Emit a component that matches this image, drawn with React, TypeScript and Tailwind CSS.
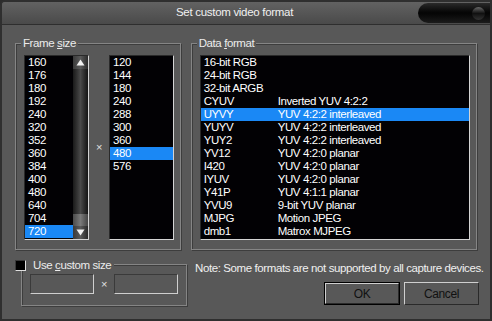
import type { ReactNode } from "react";

const WIDTHS = ["160", "176", "180", "192", "240", "320", "352", "360", "384", "400", "480", "640", "704", "720"];
const HEIGHTS = ["120", "144", "180", "240", "288", "300", "360", "480", "576"];
const FORMATS: [string, string][] = [
  ["16-bit RGB", ""],
  ["24-bit RGB", ""],
  ["32-bit ARGB", ""],
  ["CYUV", "Inverted YUV 4:2:2"],
  ["UYVY", "YUV 4:2:2 interleaved"],
  ["YUYV", "YUV 4:2:2 interleaved"],
  ["YUY2", "YUV 4:2:2 interleaved"],
  ["YV12", "YUV 4:2:0 planar"],
  ["I420", "YUV 4:2:0 planar"],
  ["IYUV", "YUV 4:2:0 planar"],
  ["Y41P", "YUV 4:1:1 planar"],
  ["YVU9", "9-bit YUV planar"],
  ["MJPG", "Motion JPEG"],
  ["dmb1", "Matrox MJPEG"],
];

function Row({ selected, children }: { selected?: boolean; children: ReactNode }) {
  return (
    <div
      className={
        "flex h-[13px] items-center pl-[3px] leading-[13px] text-white " +
        (selected ? "bg-[#1a88f5]" : "")
      }
    >
      {children}
    </div>
  );
}

function ListBox({ className, children }: { className: string; children: ReactNode }) {
  return (
    <div
      className={
        "flex h-[185px] border border-t-[#2a2a2a] border-l-[#2a2a2a] border-r-[#d4d4d4] border-b-[#d4d4d4] bg-[#020104] " +
        className
      }
    >
      {children}
    </div>
  );
}

function Group({ label, className, children }: { label: ReactNode; className: string; children: ReactNode }) {
  return (
    <div className={"relative border border-[#858585] shadow-[inset_1px_1px_0_#3d3d3d,1px_1px_0_#3d3d3d] " + className}>
      <div className="absolute left-[5px] top-[-7px] bg-[#585858] px-[2px] leading-[13px] text-[#ececec]">
        {label}
      </div>
      {children}
    </div>
  );
}

function ScrollBar() {
  return (
    <div className="flex w-[15px] flex-col bg-[#1c1c1c]">
      <div className="flex h-[13px] items-center justify-center bg-gradient-to-r from-[#3a3a3a] via-[#5a5a5a] to-[#2a2a2a]">
        <svg width="9" height="7" viewBox="0 0 9 7">
          <path d="M4.5 0.5 L8.5 6.5 L0.5 6.5 Z" fill="#f2f2f2" />
        </svg>
      </div>
      <div className="flex-1 bg-gradient-to-r from-[#1a1a1a] via-[#4a4a4a] to-[#151515]" />
      <div className="h-[12px] bg-gradient-to-r from-[#4a4a4a] via-[#7a7a7a] to-[#444]" />
      <div className="flex h-[13px] items-center justify-center bg-gradient-to-r from-[#3a3a3a] via-[#5a5a5a] to-[#2a2a2a]">
        <svg width="9" height="7" viewBox="0 0 9 7">
          <path d="M0.5 0.5 L8.5 0.5 L4.5 6.5 Z" fill="#f2f2f2" />
        </svg>
      </div>
    </div>
  );
}

function EditBox() {
  return (
    <div className="h-[20px] w-[64px] border border-t-[#3a3a3a] border-l-[#3a3a3a] border-r-[#cfcfcf] border-b-[#cfcfcf] bg-[#585858]" />
  );
}

export default function App() {
  return (
    <div className="h-[321px] w-[492px] bg-[#2c2c2c] font-['Liberation_Sans',Arial,sans-serif] text-[11.5px] tracking-[-0.4px]">
      <div className="flex h-full flex-col overflow-hidden rounded-tl-[5px] border-2 border-[#2f2f2f] bg-[#585858]">
        {/* title bar */}
        <div className="flex h-[23px] shrink-0 items-center border-b border-[#2e2e2e] bg-gradient-to-b from-[#626262] to-[#4a4a4a]">
          <div className="flex-1 pl-[174px] text-[11.5px] tracking-[-0.3px] text-[#f0f0f0]">Set custom video format</div>
          <div className="flex h-[20px] w-[72px] items-center justify-end rounded-l-[10px] bg-gradient-to-b from-[#2a2a2a] via-[#050505] to-[#1c1c1c] pr-[5px]">
            <div className="h-[13px] w-[13px] rounded-full bg-gradient-to-b from-[#6a6a6a] via-[#111] to-[#333]" />
          </div>
        </div>

        <div className="flex flex-col px-[13px] pt-[18px]">
          <div className="flex gap-[10px]">
            <Group
              className="h-[207px] w-[166px]"
              label={
                <>
                  Frame <span className="underline">s</span>ize
                </>
              }
            >
              <div className="flex items-start pl-[8px] pt-[11px]">
                <ListBox className="w-[65px]">
                  <div className="flex-1">
                    {WIDTHS.map((w) => (
                      <Row key={w} selected={w === "720"}>
                        {w}
                      </Row>
                    ))}
                  </div>
                  <ScrollBar />
                </ListBox>
                <div className="flex h-[185px] w-[20px] items-center justify-center text-[11px] text-[#e0e0e0]">×</div>
                <ListBox className="w-[65px]">
                  <div className="flex-1">
                    {HEIGHTS.map((h) => (
                      <Row key={h} selected={h === "480"}>
                        {h}
                      </Row>
                    ))}
                  </div>
                </ListBox>
              </div>
            </Group>

            <Group
              className="h-[207px] w-[287px]"
              label={
                <>
                  Data <span className="underline">f</span>ormat
                </>
              }
            >
              <div className="pl-[8px] pt-[11px]">
                <ListBox className="w-[270px] flex-col">
                  {FORMATS.map(([code, desc]) => (
                    <Row key={code} selected={code === "UYVY"}>
                      <span className="w-[74px] shrink-0">{code}</span>
                      <span>{desc}</span>
                    </Row>
                  ))}
                </ListBox>
              </div>
            </Group>
          </div>

          <div className="mt-[9px] flex">
            <div className="relative w-[172px] shrink-0 pl-[6px] pt-[5px]">
              <div className="h-[42px] w-[166px] border border-[#858585] shadow-[inset_1px_1px_0_#3d3d3d,1px_1px_0_#3d3d3d]">
                <div className="flex items-center pl-[8px] pt-[9px]">
                  <EditBox />
                  <div className="w-[20px] text-center text-[11px] text-[#e0e0e0]">×</div>
                  <EditBox />
                </div>
              </div>
              <div className="absolute left-0 top-0 flex items-center gap-[7px] bg-[#585858] pr-[3px]">
                <div className="h-[11px] w-[11px] border border-t-[#3a3a3a] border-l-[#3a3a3a] border-r-[#e0e0e0] border-b-[#e0e0e0] bg-black" />
                <span className="leading-[12px] text-[#ececec]">
                  Use <span className="underline">c</span>ustom size
                </span>
              </div>
            </div>

            <div className="ml-[8px] flex w-[284px] min-w-0 shrink-0 flex-col">
              <div className="whitespace-nowrap pt-[2px] leading-[14px] text-[#f0f0f0]">
                Note: Some formats are not supported by all capture devices.
              </div>
              <div className="mt-[7px] flex justify-end gap-[4px]">
                <div className="border border-black">
                  <div className="flex h-[21px] w-[74px] items-center justify-center border border-t-[#cfcfcf] border-l-[#cfcfcf] border-r-[#2a2a2a] border-b-[#2a2a2a] text-[12px] text-[#111]">
                    OK
                  </div>
                </div>
                <div className="flex h-[23px] w-[75px] items-center justify-center border border-t-[#cfcfcf] border-l-[#cfcfcf] border-r-[#2a2a2a] border-b-[#2a2a2a] text-[12px] text-[#111]">
                  Cancel
                </div>
              </div>
            </div>
          </div>
        </div>
      </div>
    </div>
  );
}
